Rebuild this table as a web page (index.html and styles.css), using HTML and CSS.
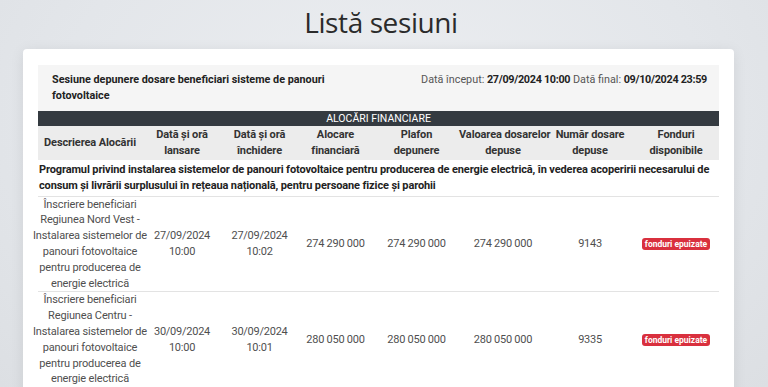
FILE: index.html
```html
<!DOCTYPE html>
<html lang="ro">
<head>
<meta charset="utf-8">
<title>Listă sesiuni</title>
<link rel="stylesheet" href="styles.css">
</head>
<body>
<main class="page">
  <h1 class="title">Listă sesiuni</h1>
  <section class="card">
    <div class="session">
      <div class="session-name">Sesiune depunere dosare beneficiari sisteme de panouri fotovoltaice</div>
      <div class="session-dates">Dată început: <b>27/09/2024 10:00</b> Dată final: <b>09/10/2024 23:59</b></div>
    </div>
    <table class="alloc">
      <colgroup>
        <col class="c1"><col class="c2"><col class="c3"><col class="c4"><col class="c5"><col class="c6"><col class="c7"><col class="c8">
      </colgroup>
      <thead>
        <tr class="band"><th colspan="8">ALOCĂRI FINANCIARE</th></tr>
        <tr class="heads">
          <th>Descrierea Alocării</th>
          <th>Dată și oră<br>lansare</th>
          <th>Dată și oră<br>închidere</th>
          <th>Alocare<br>financiară</th>
          <th>Plafon<br>depunere</th>
          <th>Valoarea dosarelor<br>depuse</th>
          <th>Număr dosare<br>depuse</th>
          <th>Fonduri<br>disponibile</th>
        </tr>
      </thead>
      <tbody>
        <tr class="program"><td colspan="8">Programul privind instalarea sistemelor de panouri fotovoltaice pentru producerea de energie electrică, în vederea acoperirii necesarului de consum și livrării surplusului în rețeaua națională, pentru persoane fizice și parohii</td></tr>
        <tr class="row">
          <td><div class="desc">Înscriere beneficiari<br>Regiunea Nord Vest -<br>Instalarea sistemelor de<br>panouri fotovoltaice<br>pentru producerea de<br>energie electrică</div></td>
          <td class="num">27/09/2024<br>10:00</td>
          <td class="num">27/09/2024<br>10:02</td>
          <td class="num">274 290 000</td>
          <td class="num">274 290 000</td>
          <td class="num">274 290 000</td>
          <td class="num">9143</td>
          <td><span class="badge">fonduri epuizate</span></td>
        </tr>
        <tr class="row">
          <td><div class="desc">Înscriere beneficiari<br>Regiunea Centru -<br>Instalarea sistemelor de<br>panouri fotovoltaice<br>pentru producerea de<br>energie electrică</div></td>
          <td class="num">30/09/2024<br>10:00</td>
          <td class="num">30/09/2024<br>10:01</td>
          <td class="num">280 050 000</td>
          <td class="num">280 050 000</td>
          <td class="num">280 050 000</td>
          <td class="num">9335</td>
          <td><span class="badge">fonduri epuizate</span></td>
        </tr>
      </tbody>
    </table>
  </section>
</main>
</body>
</html>
```
FILE: styles.css
```css
* { box-sizing: border-box; }
html, body { margin: 0; height: 100%; overflow: hidden; }
body {
  background: radial-gradient(ellipse at 50% 30%, #eceef1 0%, #e3e6ea 60%, #dcdfe3 100%);
  font-family: Roboto, "Open Sans", sans-serif;
  color: #333;
}
.page { padding-top: 5px; }
.title {
  margin: 0 0 9px;
  text-align: center;
  font-family: "Open Sans", sans-serif;
  font-size: 28px;
  font-weight: 500;
  line-height: 35px;
  color: #2b2b2b;
  padding-right: 6px;
  letter-spacing: -0.4px;
}
.card {
  margin-left: 23px;
  width: 711px;
  background: #fff;
  border-radius: 4px;
  box-shadow: 0 2px 14px rgba(0,0,0,0.08);
  padding: 16px 15px 0;
  min-height: 400px;
}
.session {
  background: #f5f5f5;
  display: flex;
  justify-content: space-between;
  align-items: flex-start;
  padding: 7px 12px 7px 14px;
  font-size: 10.8px;
  line-height: 16px;
}
.session-name { font-weight: 700; width: 300px; color: #222; }
.session-dates { color: #555; }
.session-dates b { color: #222; letter-spacing: -0.3px; }
.alloc {
  width: 100%;
  border-collapse: collapse;
  table-layout: fixed;
  font-size: 11px;
  line-height: 15.8px;
}
.c1 { width: 104px; } .c2 { width: 80px; } .c3 { width: 75px; } .c4 { width: 77px; }
.c5 { width: 85px; } .c6 { width: 88px; } .c7 { width: 86px; } .c8 { width: 86px; }
.band th {
  background: #343a40;
  color: #fff;
  font-weight: 400;
  height: 15px;
  line-height: 15px;
  padding: 0;
  font-size: 10.5px;
}
.heads th {
  background: #ececec;
  color: #333;
  font-weight: 700;
  padding: 1px 0 1px;
  line-height: 16px;
  text-align: center;
  vertical-align: middle;
  white-space: nowrap;
  letter-spacing: -0.1px;
}
.program td {
  font-weight: 700;
  color: #222;
  padding: 2px 0 2px 1px;
  letter-spacing: -0.12px;
  border-bottom: 1px solid #e3e3e3;
}
.row td {
  text-align: center;
  vertical-align: middle;
  color: #4f4f4f;
  padding: 0;
  border-bottom: 1px solid #e3e3e3;
  white-space: nowrap;
}
.row td.num { letter-spacing: -0.25px; }
.desc { margin: 0 -8px; letter-spacing: -0.15px; }
.badge {
  display: inline-block;
  background: #d9303e;
  color: #fff;
  font-size: 8.5px;
  font-weight: 700;
  line-height: 12px;
  padding: 0 3px;
  border-radius: 3px;
}
```
